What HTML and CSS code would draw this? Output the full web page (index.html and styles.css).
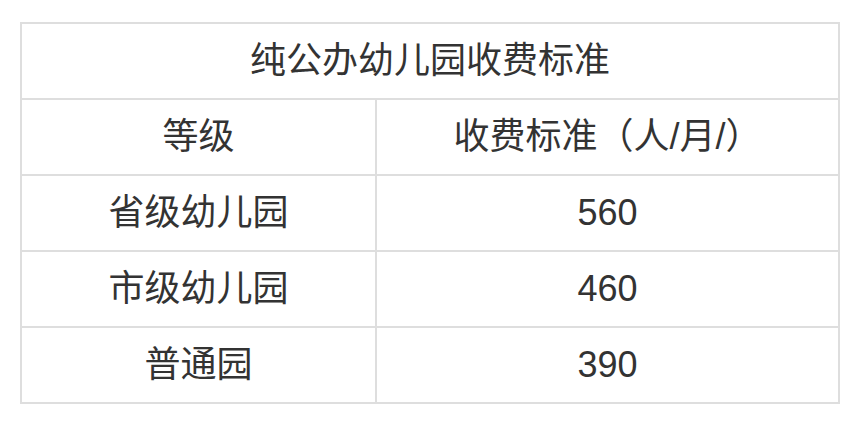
FILE: index.html
```html
<!DOCTYPE html>
<html lang="zh">
<head>
<meta charset="utf-8">
<link rel="stylesheet" href="styles.css">
</head>
<body>
<table class="fee">
  <colgroup><col class="col1"><col class="col2"></colgroup>
  <tr><td class="title" colspan="2">纯公办幼儿园收费标准</td></tr>
  <tr><td>等级</td><td>收费标准（人/月/）</td></tr>
  <tr><td>省级幼儿园</td><td>560</td></tr>
  <tr><td>市级幼儿园</td><td>460</td></tr>
  <tr><td>普通园</td><td>390</td></tr>
</table>
</body>
</html>
```
FILE: styles.css
```css
html, body { margin: 0; padding: 0; background: #fff; }
body { padding: 22px 0 0 20px; }
.fee {
  border-collapse: collapse;
  width: 818px;
  font-family: "Liberation Sans", "Noto Sans CJK SC", sans-serif;
  font-size: 36px;
  color: #333;
  table-layout: fixed;
}
.col1 { width: 355px; }
.col2 { width: 463px; }
.fee td {
  border: 2px solid #dedede;
  height: 74px;
  padding: 0;
  text-align: center;
  vertical-align: middle;
  line-height: 1;
}
```
